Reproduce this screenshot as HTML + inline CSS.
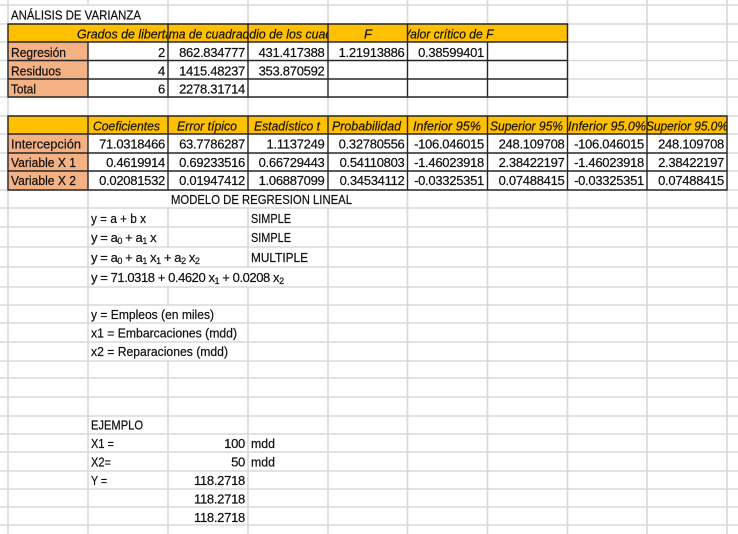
<!DOCTYPE html>
<html lang="es"><head><meta charset="utf-8"><title>Análisis de varianza</title>
<style>
html,body{margin:0;padding:0;background:#fff;width:738px;height:534px;overflow:hidden}
svg{display:block}
text{font-family:"Liberation Sans",sans-serif;font-size:13px;fill:#111;stroke:#111;stroke-width:.22px}
.n{font-size:13px;letter-spacing:-.28px;text-anchor:end}
.h{font-style:italic;fill:#1a1400;stroke:#1a1400}
.f{letter-spacing:-.43px}
.g{stroke:#d8d8d8;stroke-width:1.6;fill:none}
.b{stroke:#262626;stroke-width:1.4;fill:none}
.s{font-size:9px}
</style></head><body>
<svg width="738" height="534" viewBox="0 0 738 534" style="filter:blur(.3px)">
<!-- horizontal grid -->
<path class="g" d="M0 5H738M0 24H738M0 42H738M0 60.500H738M0 79H738M0 97H738M0 116H738M0 134H738M0 153H738M0 171H738M0 190H738M0 208H738M0 227H738M0 247H738M0 267H738M0 287H738M0 305H738M0 323H738M0 342H738M0 361H738M0 378H738M0 397H738M0 416H738M0 434H738M0 452H738M0 471H738M0 489H738M0 507H738M0 525H738"/>
<!-- vertical grid -->
<path class="g" d="M8 0V534M88 0V5M88 97V534M168 0V190M168 208V247M168 287V305M168 361V534M248 0V190M248 208V267M248 287V534M328 0V190M328 208V534M407.500 0V534M487.500 0V534M567.500 0V534M647 0V534M727 0V534"/>
<!-- fills -->
<rect x="8" y="24" width="559.500" height="18" fill="#ffc000"/>
<rect x="8" y="42" width="80" height="55" fill="#f4b183"/>
<rect x="88" y="42" width="479.500" height="55" fill="#fff"/>
<rect x="8" y="116" width="719" height="18" fill="#ffc000"/>
<rect x="8" y="134" width="80" height="56" fill="#f4b183"/>
<rect x="88" y="134" width="639" height="56" fill="#fff"/>
<!-- borders -->
<path class="b" d="M8 24H567.500V97H8ZM8 42H567.500M8 60.500H567.500M8 79H567.500M88 42V97M168 24V97M248 24V97M328 24V97M407.500 24V97M487.500 42V97"/>
<path class="b" d="M8 116H727V190H8ZM8 134H727M8 153H727M8 171H727M88 116V190M168 116V190M248 116V190M328 116V190M407.500 116V190M487.500 116V190M567.500 116V190M647 116V190"/>
<!-- title -->
<text x="11" y="19.500" textLength="130" lengthAdjust="spacingAndGlyphs">ANÁLISIS DE VARIANZA</text>
<!-- table 1 header -->
<svg x="8" y="24" width="160" height="18"><text class="h" x="69" y="14.500" textLength="102" lengthAdjust="spacingAndGlyphs">Grados de libertad</text></svg>
<svg x="168" y="24" width="80" height="18"><text class="h" x="-14" y="14.500" textLength="108" lengthAdjust="spacingAndGlyphs">Suma de cuadrados</text></svg>
<svg x="248" y="24" width="80" height="18"><text class="h" x="-35" y="14.500" textLength="150" lengthAdjust="spacingAndGlyphs">Promedio de los cuadrados</text></svg>
<text class="h" x="364" y="38.500">F</text>
<svg x="407.500" y="24" width="100" height="18"><text class="h" x="-5" y="14.500" textLength="91" lengthAdjust="spacingAndGlyphs">Valor crítico de F</text></svg>
<!-- table 1 body -->
<text x="11" y="57" textLength="55" lengthAdjust="spacingAndGlyphs">Regresión</text>
<text x="11" y="75.500" textLength="50" lengthAdjust="spacingAndGlyphs">Residuos</text>
<text x="11" y="93.500" textLength="25" lengthAdjust="spacingAndGlyphs">Total</text>
<text class="n" x="165" y="57">2</text><text class="n" x="245" y="57">862.834777</text><text class="n" x="324.500" y="57">431.417388</text><text class="n" x="404.500" y="57">1.21913886</text><text class="n" x="484" y="57">0.38599401</text>
<text class="n" x="165" y="75.500">4</text><text class="n" x="245" y="75.500">1415.48237</text><text class="n" x="324.500" y="75.500">353.870592</text>
<text class="n" x="165" y="93.500">6</text><text class="n" x="245" y="93.500">2278.31714</text>
<!-- table 2 header -->
<text class="h" x="93" y="130.500" textLength="67" lengthAdjust="spacingAndGlyphs">Coeficientes</text>
<text class="h" x="177" y="130.500" textLength="60" lengthAdjust="spacingAndGlyphs">Error típico</text>
<text class="h" x="254" y="130.500" textLength="66" lengthAdjust="spacingAndGlyphs">Estadístico t</text>
<text class="h" x="332" y="130.500" textLength="69" lengthAdjust="spacingAndGlyphs">Probabilidad</text>
<text class="h" x="413" y="130.500" textLength="68" lengthAdjust="spacingAndGlyphs">Inferior 95%</text>
<text class="h" x="490" y="130.500" textLength="73" lengthAdjust="spacingAndGlyphs">Superior 95%</text>
<text class="h" x="568" y="130.500" textLength="78" lengthAdjust="spacingAndGlyphs">Inferior 95.0%</text>
<text class="h" x="646" y="130.500" textLength="82" lengthAdjust="spacingAndGlyphs">Superior 95.0%</text>
<!-- table 2 body -->
<text x="11" y="148.500" textLength="70" lengthAdjust="spacingAndGlyphs">Intercepción</text>
<text x="11" y="167" textLength="65" lengthAdjust="spacingAndGlyphs">Variable X 1</text>
<text x="11" y="185" textLength="65" lengthAdjust="spacingAndGlyphs">Variable X 2</text>
<text class="n" x="165" y="148.500">71.0318466</text><text class="n" x="245" y="148.500">63.7786287</text><text class="n" x="324.500" y="148.500">1.1137249</text><text class="n" x="404.500" y="148.500">0.32780556</text><text class="n" x="484" y="148.500">-106.046015</text><text class="n" x="564.500" y="148.500">248.109708</text><text class="n" x="644" y="148.500">-106.046015</text><text class="n" x="724" y="148.500">248.109708</text>
<text class="n" x="165" y="167">0.4619914</text><text class="n" x="245" y="167">0.69233516</text><text class="n" x="324.500" y="167">0.66729443</text><text class="n" x="404.500" y="167">0.54110803</text><text class="n" x="484" y="167">-1.46023918</text><text class="n" x="564.500" y="167">2.38422197</text><text class="n" x="644" y="167">-1.46023918</text><text class="n" x="724" y="167">2.38422197</text>
<text class="n" x="165" y="185">0.02081532</text><text class="n" x="245" y="185">0.01947412</text><text class="n" x="324.500" y="185">1.06887099</text><text class="n" x="404.500" y="185">0.34534112</text><text class="n" x="484" y="185">-0.03325351</text><text class="n" x="564.500" y="185">0.07488415</text><text class="n" x="644" y="185">-0.03325351</text><text class="n" x="724" y="185">0.07488415</text>
<!-- model -->
<text x="171" y="204" textLength="181" lengthAdjust="spacingAndGlyphs">MODELO DE REGRESION LINEAL</text>
<text x="91" y="223" textLength="55" lengthAdjust="spacingAndGlyphs">y = a + b x</text>
<text x="251" y="223" textLength="40" lengthAdjust="spacingAndGlyphs">SIMPLE</text>
<text class="f" x="91" y="242">y = a<tspan class="s" dy="2">0</tspan><tspan dy="-2"> + a</tspan><tspan class="s" dy="2">1</tspan><tspan dy="-2"> x</tspan></text>
<text x="251" y="242" textLength="40" lengthAdjust="spacingAndGlyphs">SIMPLE</text>
<text class="f" x="91" y="262">y = a<tspan class="s" dy="2">0</tspan><tspan dy="-2"> + a</tspan><tspan class="s" dy="2">1</tspan><tspan dy="-2"> x</tspan><tspan class="s" dy="2">1</tspan><tspan dy="-2"> + a</tspan><tspan class="s" dy="2">2</tspan><tspan dy="-2"> x</tspan><tspan class="s" dy="2">2</tspan></text>
<text x="251" y="262" textLength="57" lengthAdjust="spacingAndGlyphs">MULTIPLE</text>
<text class="f" x="91" y="282">y = 71.0318 + 0.4620 x<tspan class="s" dy="2">1</tspan><tspan dy="-2"> + 0.0208 x</tspan><tspan class="s" dy="2">2</tspan></text>
<text x="91" y="319" textLength="123" lengthAdjust="spacingAndGlyphs">y = Empleos (en miles)</text>
<text x="91" y="337.500" textLength="146" lengthAdjust="spacingAndGlyphs">x1 = Embarcaciones (mdd)</text>
<text x="91" y="356" textLength="137" lengthAdjust="spacingAndGlyphs">x2 = Reparaciones (mdd)</text>
<!-- example -->
<text x="91" y="429.500" textLength="52" lengthAdjust="spacingAndGlyphs">EJEMPLO</text>
<text x="91" y="448" textLength="23" lengthAdjust="spacingAndGlyphs">X1 =</text>
<text x="91" y="466.500" textLength="20" lengthAdjust="spacingAndGlyphs">X2=</text>
<text x="91" y="485" textLength="16" lengthAdjust="spacingAndGlyphs">Y =</text>
<text class="n" x="245" y="448">100</text><text x="251" y="448" textLength="24" lengthAdjust="spacingAndGlyphs">mdd</text>
<text class="n" x="245" y="466.500">50</text><text x="251" y="466.500" textLength="24" lengthAdjust="spacingAndGlyphs">mdd</text>
<text class="n" x="245" y="485">118.2718</text>
<text class="n" x="245" y="503.500">118.2718</text>
<text class="n" x="245" y="522">118.2718</text>
</svg>
</body></html>
